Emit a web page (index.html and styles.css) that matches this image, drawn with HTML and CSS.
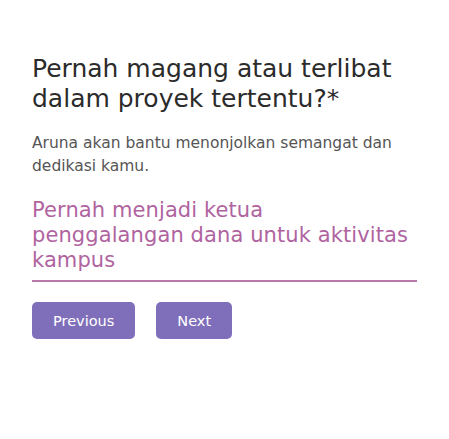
FILE: index.html
```html
<!DOCTYPE html>
<html lang="id">
<head>
<meta charset="utf-8">
<title>Form</title>
<link rel="stylesheet" href="styles.css">
</head>
<body>
<main class="form">
  <h1 class="question">Pernah magang atau terlibat dalam proyek tertentu?*</h1>
  <p class="hint">Aruna akan bantu menonjolkan semangat dan dedikasi kamu.</p>
  <div class="answer">Pernah menjadi ketua penggalangan dana untuk aktivitas kampus</div>
  <div class="actions">
    <button class="btn btn-prev">Previous</button>
    <button class="btn btn-next">Next</button>
  </div>
</main>
</body>
</html>
```

FILE: styles.css
```css
html, body {
  margin: 0;
  padding: 0;
  background: #ffffff;
}
body {
  font-family: "DejaVu Sans", sans-serif;
}
.form {
  padding: 54px 32px 0 32px;
  width: 385px;
}
.question {
  margin: 0;
  font-size: 25px;
  font-weight: normal;
  line-height: 30px;
  color: #2b2b2b;
}
.hint {
  margin: 18px 0 0 0;
  font-size: 15.5px;
  line-height: 23px;
  color: #555555;
}
.answer {
  margin-top: 20px;
  font-size: 21px;
  line-height: 25px;
  letter-spacing: 0.1px;
  color: #b0649f;
  padding-bottom: 7px;
  border-bottom: 2px solid #b77aa9;
}
.actions {
  display: flex;
  gap: 21px;
  margin-top: 20px;
}
.btn {
  border: none;
  border-radius: 5px;
  background: #7f6fba;
  color: #ffffff;
  font-family: inherit;
  font-size: 14.5px;
  height: 37px;
  padding: 0 21px;
}
```
